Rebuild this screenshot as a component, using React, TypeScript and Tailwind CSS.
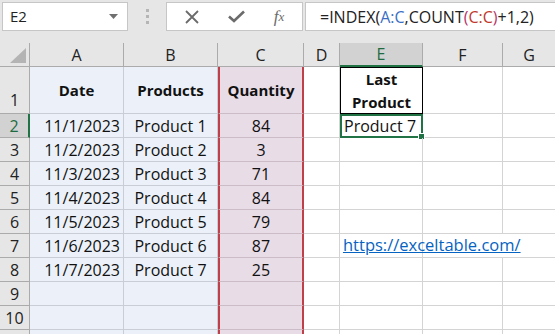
import React from 'react';

const cols = ['A', 'B', 'C', 'D', 'E', 'F', 'G'];

const data: [string, string, string][] = [
  ['11/1/2023', 'Product 1', '84'],
  ['11/2/2023', 'Product 2', '3'],
  ['11/3/2023', 'Product 3', '71'],
  ['11/4/2023', 'Product 4', '84'],
  ['11/5/2023', 'Product 5', '79'],
  ['11/6/2023', 'Product 6', '87'],
  ['11/7/2023', 'Product 7', '25'],
  ['', '', ''],
  ['', '', ''],
  ['', '', ''],
];

function TopBar() {
  return (
    <div className="flex h-[43px] items-start gap-0 bg-[#e6e6e6] pt-[2px] pl-[2px]">
      <div className="flex h-[29px] w-[126px] items-center justify-between border border-[#c6c6c6] bg-white pl-[7px] pr-[9px] text-[15px] text-[#222]">
        <span>E2</span>
        <svg width="9" height="5" viewBox="0 0 9 5">
          <path d="M0 0 L9 0 L4.5 5 Z" fill="#6f6f6f" />
        </svg>
      </div>
      <div className="flex h-[29px] w-[38px] flex-col items-center justify-center gap-[3px]">
        <span className="h-[3px] w-[3px] bg-[#b5b5b5]" />
        <span className="h-[3px] w-[3px] bg-[#b5b5b5]" />
        <span className="h-[3px] w-[3px] bg-[#b5b5b5]" />
      </div>
      <div className="flex h-[29px] w-[137px] items-center border border-[#c6c6c6] bg-white">
        <div className="flex w-[46px] justify-center pl-[4px]">
          <svg width="14" height="14" viewBox="0 0 14 14">
            <path d="M1 1 L13 13 M13 1 L1 13" stroke="#6b6b6b" strokeWidth="1.8" />
          </svg>
        </div>
        <div className="flex w-[46px] justify-center">
          <svg width="17" height="13" viewBox="0 0 17 13">
            <path d="M1 6.5 L6 11 L16 1.5" stroke="#6b6b6b" strokeWidth="2.6" fill="none" />
          </svg>
        </div>
        <div className="flex w-[40px] justify-center font-['Liberation_Serif',serif] text-[17px] italic text-[#6b6b6b]">
          <span>f</span>
          <span className="text-[13px] leading-[26px]">x</span>
        </div>
      </div>
      <div className="ml-[2px] flex h-[29px] flex-1 items-center border border-r-0 border-[#c6c6c6] bg-white pl-[14px] text-[16px] text-[#222]">
        <span>=INDEX(</span>
        <span className="text-[#3a6fc4]">A:C</span>
        <span>,COUNT</span>
        <span className="text-[#b8336a]">(</span>
        <span className="text-[#c0392b]">C:C</span>
        <span className="text-[#b8336a]">)</span>
        <span>+1,2)</span>
      </div>
    </div>
  );
}

export default function App() {
  const font = "font-['Open_Sans',sans-serif]";
  return (
    <div className={`h-[334px] w-[555px] overflow-hidden bg-white ${font}`}>
      <TopBar />
      <div className="grid grid-cols-[30px_94px_94px_86px_36px_83px_80px_52px] grid-rows-[24px_47px_repeat(10,24px)]">
        {/* header row */}
        <div className="relative border-r border-b border-[#ababab] bg-[#e6e6e6]">
          <svg className="absolute left-[10px] top-[5px]" width="16" height="15" viewBox="0 0 16 15">
            <path d="M16 0 L16 15 L0 15 Z" fill="#b4b4b4" />
          </svg>
        </div>
        {cols.map((c) => (
          <div
            key={c}
            className={`flex items-center justify-center text-[16px] ${
              c === 'E'
                ? 'border-r border-b-2 border-r-[#ababab] border-b-[#217346] bg-[#d2d2d2] text-[#1e6b41]'
                : `border-b border-[#ababab] bg-[#e6e6e6] text-[#222] ${c === 'G' ? '' : 'border-r'}`
            }`}
          >
            {c}
          </div>
        ))}

        {/* row 1 */}
        <div className="flex items-end justify-center border-r border-b border-[#ababab] bg-[#e6e6e6] pb-[1px] text-[16px] text-[#222]">
          1
        </div>
        <div className="flex items-center justify-center border-r border-b border-[#c9ced6] bg-[#ecf1f9] text-[15px] font-bold text-[#111]">
          Date
        </div>
        <div className="flex items-center justify-center border-r border-b border-[#c9ced6] bg-[#ecf1f9] text-[15px] font-bold text-[#111]">
          Products
        </div>
        <div className="flex items-center justify-center border-x-2 border-b border-x-[#c0404a] border-b-[#cbbcc8] bg-[#e8dce6] text-[15px] font-bold text-[#111]">
          Quantity
        </div>
        <div className="border-r border-b border-[#d4d4d4]" />
        <div className="flex flex-col items-center justify-center border border-black text-[15px] font-bold leading-[23px] text-[#111]">
          <span>Last</span>
          <span>Product</span>
        </div>
        <div className="border-r border-b border-[#d4d4d4]" />
        <div className="border-b border-[#d4d4d4]" />

        {data.map(([d, p, q], i) => {
          const row = i + 2;
          const sel = row === 2;
          return (
            <React.Fragment key={row}>
              <div
                className={`flex items-center justify-center border-b text-[16px] ${
                  sel
                    ? 'border-r-2 border-r-[#217346] border-b-[#ababab] bg-[#d2d2d2] text-[#1e6b41]'
                    : 'border-r border-[#ababab] bg-[#e6e6e6] text-[#222]'
                }`}
              >
                {row}
              </div>
              <div className="flex items-center justify-end border-r border-b border-[#c9ced6] bg-[#ecf1f9] pr-[3px] text-[16px] text-[#111]">
                {d}
              </div>
              <div className="flex items-center justify-center border-r border-b border-[#c9ced6] bg-[#ecf1f9] text-[16px] text-[#111]">
                {p}
              </div>
              <div className="flex items-center justify-center border-x-2 border-b border-x-[#c0404a] border-b-[#cbbcc8] bg-[#e8dce6] text-[16px] text-[#111]">
                {q}
              </div>
              <div className="border-r border-b border-[#d4d4d4]" />
              {sel ? (
                <div className="relative flex items-center whitespace-nowrap border-2 border-[#217346] pl-[2px] text-[16px] text-[#111]">
                  Product 7
                  <span className="absolute -right-[4px] -bottom-[4px] h-[7px] w-[7px] border border-white bg-[#217346]" />
                </div>
              ) : (
                <div className="relative flex items-center overflow-visible border-r border-b border-[#d4d4d4] pl-[3px] text-[16.5px]">
                  {row === 7 && (
                    <span className="relative z-10 whitespace-nowrap text-[#0563c1] underline">
                      https://exceltable.com/
                    </span>
                  )}
                </div>
              )}
              <div className={`border-b border-[#d4d4d4] ${row === 7 ? '' : 'border-r'}`} />
              <div className="border-b border-[#d4d4d4]" />
            </React.Fragment>
          );
        })}
      </div>
    </div>
  );
}
